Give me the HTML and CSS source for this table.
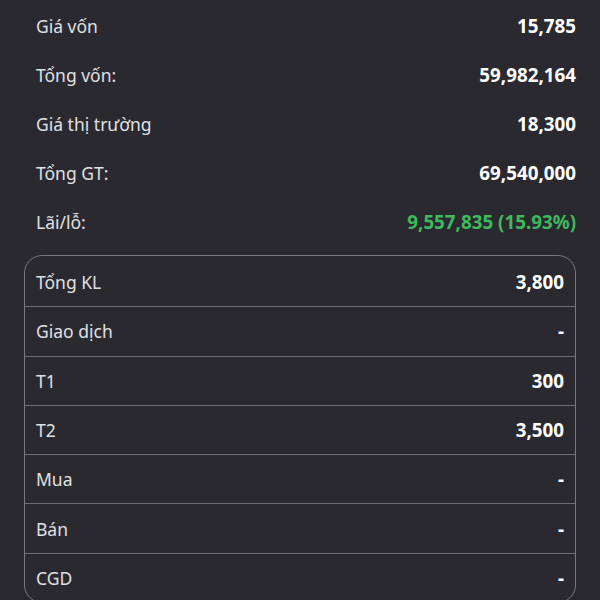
FILE: index.html
```html
<!DOCTYPE html>
<html lang="vi">
<head>
<meta charset="utf-8">
<link rel="stylesheet" href="styles.css">
</head>
<body>
<div class="page">
  <div class="summary">
    <div class="row"><span class="label">Giá vốn</span><span class="value">15,785</span></div>
    <div class="row"><span class="label">Tổng vốn:</span><span class="value">59,982,164</span></div>
    <div class="row"><span class="label">Giá thị trường</span><span class="value">18,300</span></div>
    <div class="row"><span class="label">Tổng GT:</span><span class="value">69,540,000</span></div>
    <div class="row"><span class="label">Lãi/lỗ:</span><span class="value up">9,557,835 (15.93%)</span></div>
  </div>
  <div class="table">
    <div class="trow"><span class="label">Tổng KL</span><span class="value">3,800</span></div>
    <div class="trow"><span class="label">Giao dịch</span><span class="value">-</span></div>
    <div class="trow"><span class="label">T1</span><span class="value">300</span></div>
    <div class="trow"><span class="label">T2</span><span class="value">3,500</span></div>
    <div class="trow"><span class="label">Mua</span><span class="value">-</span></div>
    <div class="trow"><span class="label">Bán</span><span class="value">-</span></div>
    <div class="trow"><span class="label">CGD</span><span class="value">-</span></div>
  </div>
</div>
</body>
</html>
```

FILE: styles.css
```css
html, body {
  margin: 0;
  padding: 0;
  background: #2a2930;
  height: 600px;
  overflow: hidden;
}
body {
  font-family: "Noto Sans", sans-serif;
  font-size: 17.5px;
  color: #e2e2e4;
}
.page {
  padding: 2px 24px 0 24px;
}
.summary .row {
  display: flex;
  justify-content: space-between;
  align-items: center;
  height: 48.8px;
  padding-left: 12px;
}
.label {
  color: #e0e0e2;
  font-size: 17.5px;
}
.value {
  color: #ffffff;
  font-weight: 700;
  font-size: 18.8px;
}
.value.up {
  color: #3dba5c;
}
.table {
  margin-top: 9px;
  border: 1.5px solid #7a797e;
  border-radius: 18px;
  overflow: hidden;
}
.trow {
  display: flex;
  justify-content: space-between;
  align-items: center;
  height: 48.3px;
  padding: 0 11px 0 11px;
  border-top: 1.5px solid #6f6e73;
}
.trow:first-child {
  border-top: none;
  padding-top: 2px;
}
```
